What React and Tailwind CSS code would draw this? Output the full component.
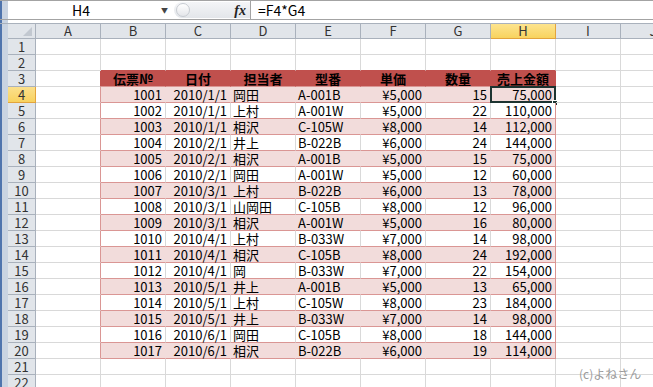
import React from 'react'

const COLS = ['A', 'B', 'C', 'D', 'E', 'F', 'G', 'H', 'I', 'J']

const HEAD = ['伝票№', '日付', '担当者', '型番', '単価', '数量', '売上金額']

const ROWS = [
  [1001, '2010/1/1', '岡田', 'A-001B', '¥5,000', 15, '75,000'],
  [1002, '2010/1/1', '上村', 'A-001W', '¥5,000', 22, '110,000'],
  [1003, '2010/1/1', '相沢', 'C-105W', '¥8,000', 14, '112,000'],
  [1004, '2010/2/1', '井上', 'B-022B', '¥6,000', 24, '144,000'],
  [1005, '2010/2/1', '相沢', 'A-001B', '¥5,000', 15, '75,000'],
  [1006, '2010/2/1', '岡田', 'A-001W', '¥5,000', 12, '60,000'],
  [1007, '2010/3/1', '上村', 'B-022B', '¥6,000', 13, '78,000'],
  [1008, '2010/3/1', '山岡田', 'C-105B', '¥8,000', 12, '96,000'],
  [1009, '2010/3/1', '相沢', 'A-001W', '¥5,000', 16, '80,000'],
  [1010, '2010/4/1', '上村', 'B-033W', '¥7,000', 14, '98,000'],
  [1011, '2010/4/1', '相沢', 'C-105B', '¥8,000', 24, '192,000'],
  [1012, '2010/4/1', '岡', 'B-033W', '¥7,000', 22, '154,000'],
  [1013, '2010/5/1', '井上', 'A-001B', '¥5,000', 13, '65,000'],
  [1014, '2010/5/1', '上村', 'C-105W', '¥8,000', 23, '184,000'],
  [1015, '2010/5/1', '井上', 'B-033W', '¥7,000', 14, '98,000'],
  [1016, '2010/6/1', '岡田', 'C-105B', '¥8,000', 18, '144,000'],
  [1017, '2010/6/1', '相沢', 'B-022B', '¥6,000', 19, '114,000'],
]

// alignment of columns B..H
const ALIGN = ['text-right pr-[3px]', 'text-right pr-[3px]', 'text-left pl-[2px]', 'text-left pl-[2px]', 'text-right pr-[3px]', 'text-right pr-[3px]', 'text-right pr-[3px]']

function Strip() {
  return (
    <div className="flex h-full w-[8px] shrink-0">
      <div className="w-[2px] bg-[#4f74ad]" />
      <div className="w-[6px] bg-[#c9d3e1]" />
    </div>
  )
}

function RowHead({ n, active }) {
  return (
    <div
      className={`flex h-full w-[28px] shrink-0 items-center justify-center border-r border-b text-[13px] leading-[15px] text-[#333] ${
        active ? 'bg-gradient-to-b from-[#fbe08c] to-[#f8d25e] border-[#e3a43c]' : 'bg-[#e1e5ea] border-[#a9b1bc]'
      }`}
    >
      {n}
    </div>
  )
}

function Cell({ children, cls = '', border = 'border-[#d9d9d9]', extra }) {
  return (
    <div className={`relative h-full w-[65px] shrink-0 whitespace-nowrap border-r border-b leading-[15px] ${border} ${cls}`}>
      {children}
      {extra}
    </div>
  )
}

function EmptyRow({ n, tableTop }) {
  return (
    <div className="flex h-[16px]">
      <Strip />
      <RowHead n={n} />
      {COLS.map((c, i) => {
        let border = 'border-[#d9d9d9]'
        if (tableTop && i >= 1 && i <= 7) border = 'border-r-[#d9d9d9] border-b-[#c0504d]'
        return <Cell key={c} border={border} />
      })}
    </div>
  )
}

function HeaderRow() {
  return (
    <div className="flex h-[16px]">
      <Strip />
      <RowHead n={3} />
      <Cell border="border-r-[#c0504d] border-b-[#d9d9d9]" />
      {HEAD.map(h => (
        <Cell key={h} cls="bg-[#c0504d] text-center font-bold text-black" border="border-b-[#da9694] border-r-[#c0504d]">
          {h}
        </Cell>
      ))}
      <Cell />
      <Cell />
    </div>
  )
}

function DataRow({ n, data, band }) {
  return (
    <div className="flex h-[16px]">
      <Strip />
      <RowHead n={n} active={n === 4} />
      <Cell border="border-r-[#da9694] border-b-[#d9d9d9]" />
      {data.map((v, i) => {
        const last = i === 6
        const border = last
          ? 'border-r-[#da9694] border-b-[#da9694]'
          : band
          ? 'border-r-[#f2dcdb] border-b-[#da9694]'
          : 'border-r-[#d9d9d9] border-b-[#da9694]'
        const sel = n === 4 && last
        return (
          <Cell
            key={i}
            cls={`${ALIGN[i]} ${band ? 'bg-[#f2dcdb]' : 'bg-white'} text-black`}
            border={border}
            extra={
              sel && (
                <>
                  <div className="pointer-events-none absolute -left-[1px] -top-[1px] h-[17px] w-[66px] border-2 border-[#1d3431]" />
                  <div className="absolute -right-[3px] -bottom-[4px] h-[6px] w-[6px] border border-white bg-[#1d3431]" />
                </>
              )
            }
          >
            {v}
          </Cell>
        )
      })}
      <Cell />
      <Cell />
    </div>
  )
}

export default function App() {
  return (
    <div
      className="relative h-[387px] w-[653px] overflow-hidden bg-white text-[13px]"
      style={{ fontFamily: '"Noto Sans CJK JP", "Noto Sans", sans-serif' }}
    >
      {/* formula bar */}
      <div className="flex h-[20px] border-t border-b border-[#a3a3a3]">
        <Strip />
        <div className="flex w-[166px] shrink-0 items-center">
          <span className="w-[146px] text-center text-[14px] leading-[16px] text-black">H4</span>
          <span className="ml-[7px] text-[7px] text-[#444]">▼</span>
        </div>
        <div className="flex w-[76px] shrink-0 items-center">
          <div className="flex h-[16px] w-[76px] items-center rounded-l-full bg-gradient-to-b from-[#f4f5f7] to-[#e3e6ea]">
            <div className="ml-[2px] h-[14px] w-[14px] rounded-full border border-[#c8ccd2] bg-gradient-to-b from-white to-[#e4e6ea]" />
            <span className="ml-auto mr-[4px] text-[14px] font-bold italic text-[#222]" style={{ fontFamily: '"Liberation Serif", serif' }}>
              fx
            </span>
          </div>
        </div>
        <div className="flex flex-1 items-center border-l border-[#a3a3a3] pl-[7px] text-[14px] leading-[16px] text-black">
          =F4*G4
        </div>
      </div>
      <div className="flex h-[3px]">
        <Strip />
        <div className="flex-1 bg-white" />
      </div>

      {/* column headers */}
      <div className="flex h-[16px] border-t border-[#a9b1bc]">
        <Strip />
        <div className="relative h-full w-[28px] shrink-0 border-r border-b border-[#a9b1bc] bg-[#e1e5ea]">
          <svg className="absolute bottom-[2px] right-[3px]" width="9" height="9" viewBox="0 0 9 9">
            <path d="M9 0 L9 9 L0 9 Z" fill="#c2c8d0" />
          </svg>
        </div>
        {COLS.map(c => (
          <div
            key={c}
            className={`flex h-full w-[65px] shrink-0 items-center justify-center border-r border-b text-[13px] leading-[14px] text-[#333] ${
              c === 'H' ? 'bg-gradient-to-b from-[#fde48e] to-[#f8d35d] border-[#e3a43c]' : 'bg-[#e1e5ea] border-[#a9b1bc]'
            }`}
          >
            {c}
          </div>
        ))}
      </div>

      <EmptyRow n={1} />
      <EmptyRow n={2} tableTop />
      <HeaderRow />
      {ROWS.map((r, i) => (
        <DataRow key={i} n={i + 4} data={r} band={i % 2 === 0} />
      ))}
      <EmptyRow n={21} />
      <EmptyRow n={22} />

      <div className="absolute left-[579px] top-[367px] text-[12px] leading-[14px] text-[#9a9a9a]">(c)よねさん</div>
    </div>
  )
}
